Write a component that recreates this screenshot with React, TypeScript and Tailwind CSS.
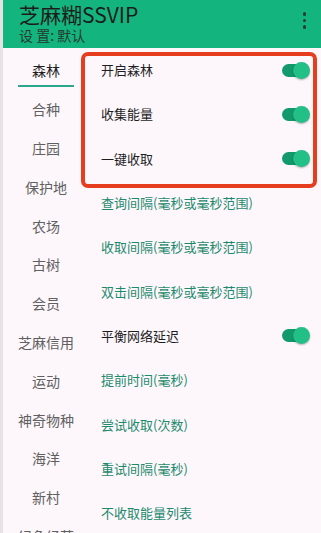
import React from "react";

const font = { fontFamily: '"Noto Sans CJK SC", "Noto Sans", sans-serif' };

function Toggle() {
  return (
    <div className="relative h-[17px] w-[28px] shrink-0">
      <div className="absolute left-0 top-[2px] h-[13px] w-[24px] rounded-full bg-[#129a6c]" />
      <div className="absolute right-0 top-0 h-[17px] w-[17px] rounded-full bg-[#22bf86] shadow-[0_1px_2px_rgba(0,0,0,0.3)]" />
    </div>
  );
}

const tabs = [
  "森林",
  "合种",
  "庄园",
  "保护地",
  "农场",
  "古树",
  "会员",
  "芝麻信用",
  "运动",
  "神奇物种",
  "海洋",
  "新村",
  "绿色经营",
];

const rows: { label: string; toggle?: boolean }[] = [
  { label: "开启森林", toggle: true },
  { label: "收集能量", toggle: true },
  { label: "一键收取", toggle: true },
  { label: "查询间隔(毫秒或毫秒范围)" },
  { label: "收取间隔(毫秒或毫秒范围)" },
  { label: "双击间隔(毫秒或毫秒范围)" },
  { label: "平衡网络延迟", toggle: true },
  { label: "提前时间(毫秒)" },
  { label: "尝试收取(次数)" },
  { label: "重试间隔(毫秒)" },
  { label: "不收取能量列表" },
];

export default function App() {
  return (
    <div
      className="relative h-[533px] w-[321px] overflow-hidden border-l-[3px] border-[#e6e2e6] bg-[#fdf7fc]"
      style={font}
    >
      <div className="flex h-[48px] items-start justify-between bg-[#14b47e] pl-[16px] pr-[15px] pt-[2px]">
        <div className="flex flex-col">
          <div className="text-[21px] leading-[25px] text-[#1c1c1c]">芝麻糊SSVIP</div>
          <div className="text-[14px] leading-[16px] text-[#263a30]">设 置: 默认</div>
        </div>
        <div className="mt-[10px] flex flex-col items-center gap-[3px]">
          <div className="h-[3.5px] w-[3.5px] rounded-full bg-[#2a3a33]" />
          <div className="h-[3.5px] w-[3.5px] rounded-full bg-[#2a3a33]" />
          <div className="h-[3.5px] w-[3.5px] rounded-full bg-[#2a3a33]" />
        </div>
      </div>
      <div className="flex">
        <div className="flex w-[86px] shrink-0 flex-col pt-[3px]">
          {tabs.map((t, i) => (
            <div key={t} className="relative flex h-[38.8px] shrink-0 items-center justify-center">
              <span
                className={
                  i === 0
                    ? "text-[14px] leading-[18px] text-[#1e1e1e]"
                    : "text-[14px] leading-[18px] text-[#606060]"
                }
              >
                {t}
              </span>
              {i === 0 && (
                <div className="absolute bottom-[3px] left-[15px] h-[2px] w-[56px] bg-[#2aa88e]" />
              )}
            </div>
          ))}
        </div>
        <div className="flex flex-1 flex-col pl-[12px] pr-[11px]">
          {rows.map((r) => (
            <div key={r.label} className="flex h-[44.3px] shrink-0 items-center justify-between">
              <span
                className={
                  r.toggle
                    ? "text-[13px] leading-[18px] text-[#1e1e1e]"
                    : "text-[13px] leading-[18px] text-[#1d8a6c]"
                }
              >
                {r.label}
              </span>
              {r.toggle && <Toggle />}
            </div>
          ))}
        </div>
      </div>
      <div className="pointer-events-none absolute left-[78px] top-[52px] h-[136px] w-[236px] rounded-[7px] border-[4px] border-[#e63d1f]" />
    </div>
  );
}
